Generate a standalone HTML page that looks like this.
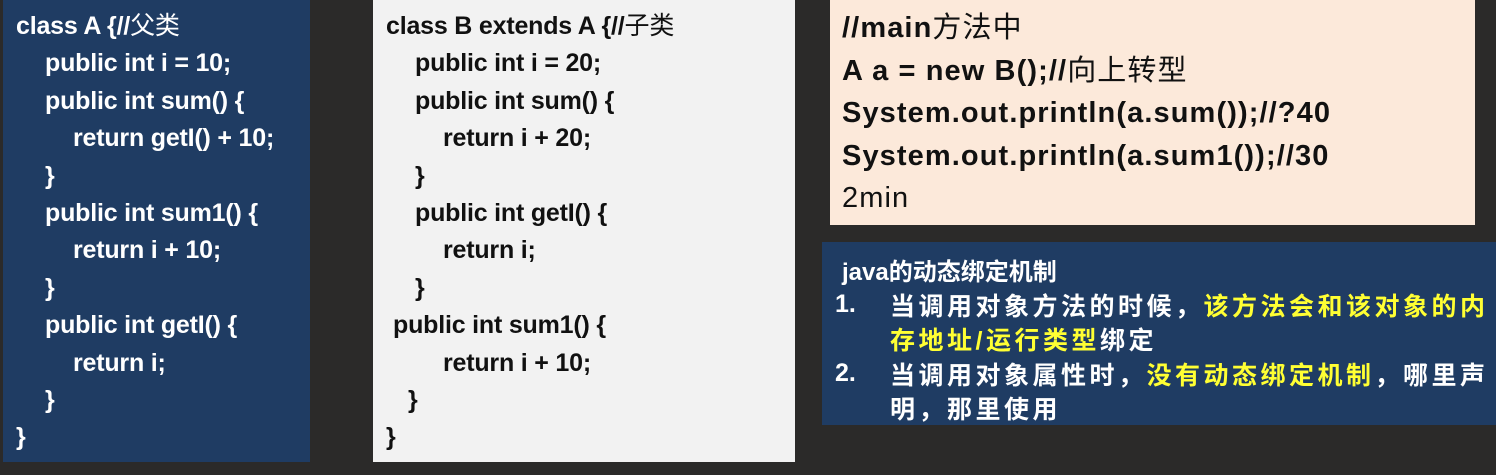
<!DOCTYPE html>
<html><head><meta charset="utf-8"><style>
body{margin:0;width:1496px;height:475px;background:#2b2a29;position:relative;overflow:hidden;font-family:"Liberation Sans","Noto Sans CJK SC",sans-serif;font-weight:bold;}
.b{position:absolute;}
.code{font-size:25px;letter-spacing:-0.2px;line-height:37.4px;}
.code div{height:37.4px;white-space:nowrap;}
.i1{padding-left:29px}.i2{padding-left:57px}.ih{padding-left:22px}
.l{position:absolute;white-space:pre;}
.cn{font-weight:normal;}
</style></head><body>
<div class="b" style="left:3px;top:0;width:307px;height:462px;background:#1f3c63;"></div>
<div class="b code" style="left:16px;top:8px;color:#fff;"><div>class A {//<span class="cn">父类</span></div><div class="i1">public int i = 10;</div><div class="i1">public int sum() {</div><div class="i2">return getI() + 10;</div><div class="i1">}</div><div class="i1">public int sum1() {</div><div class="i2">return i + 10;</div><div class="i1">}</div><div class="i1">public int getI() {</div><div class="i2">return i;</div><div class="i1">}</div><div>}</div></div>
<div class="b" style="left:373px;top:0;width:422px;height:462px;background:#f2f2f2;"></div>
<div class="b code" style="left:386px;top:8px;color:#111;"><div>class B extends A {//<span class="cn">子类</span></div><div class="i1">public int i = 20;</div><div class="i1">public int sum() {</div><div class="i2">return i + 20;</div><div class="i1">}</div><div class="i1">public int getI() {</div><div class="i2">return i;</div><div class="i1">}</div><div style="padding-left:7px">public int sum1() {</div><div class="i2">return i + 10;</div><div class="ih">}</div><div>}</div></div>
<div class="b" style="left:830px;top:0;width:645px;height:225px;background:#fce9da;"></div>
<div class="b" style="left:842px;top:7px;color:#111;font-size:29px;line-height:42.5px;letter-spacing:1.1px;white-space:pre;">//main<span class="cn">方法中</span>
A a = new B();//<span class="cn">向上转型</span>
System.out.println(a.sum());//?40
System.out.println(a.sum1());//30
<span class="cn">2min</span></div>
<div class="b" style="left:822px;top:242px;width:674px;height:183px;background:#1f3c63;"></div>
<div class="l" style="left:842px;top:252px;color:#fff;font-size:24px;">java的动态绑定机制</div>
<div class="l" style="left:835px;top:290px;color:#fff;font-size:25px;">1.</div>
<div class="l" style="left:890px;top:287px;color:#fff;font-size:25px;letter-spacing:3.5px;">当调用对象方法的时候，<span style="color:#ffff33">该方法会和该对象的内</span></div>
<div class="l" style="left:890px;top:321px;color:#ffff33;font-size:25px;letter-spacing:3.5px;">存地址/运行类型<span style="color:#fff">绑定</span></div>
<div class="l" style="left:835px;top:359px;color:#fff;font-size:25px;">2.</div>
<div class="l" style="left:890px;top:356px;color:#fff;font-size:25px;letter-spacing:3.5px;">当调用对象属性时，<span style="color:#ffff33">没有动态绑定机制</span>，哪里声</div>
<div class="l" style="left:890px;top:390px;color:#fff;font-size:25px;letter-spacing:3.5px;">明，那里使用</div>
</body></html>
